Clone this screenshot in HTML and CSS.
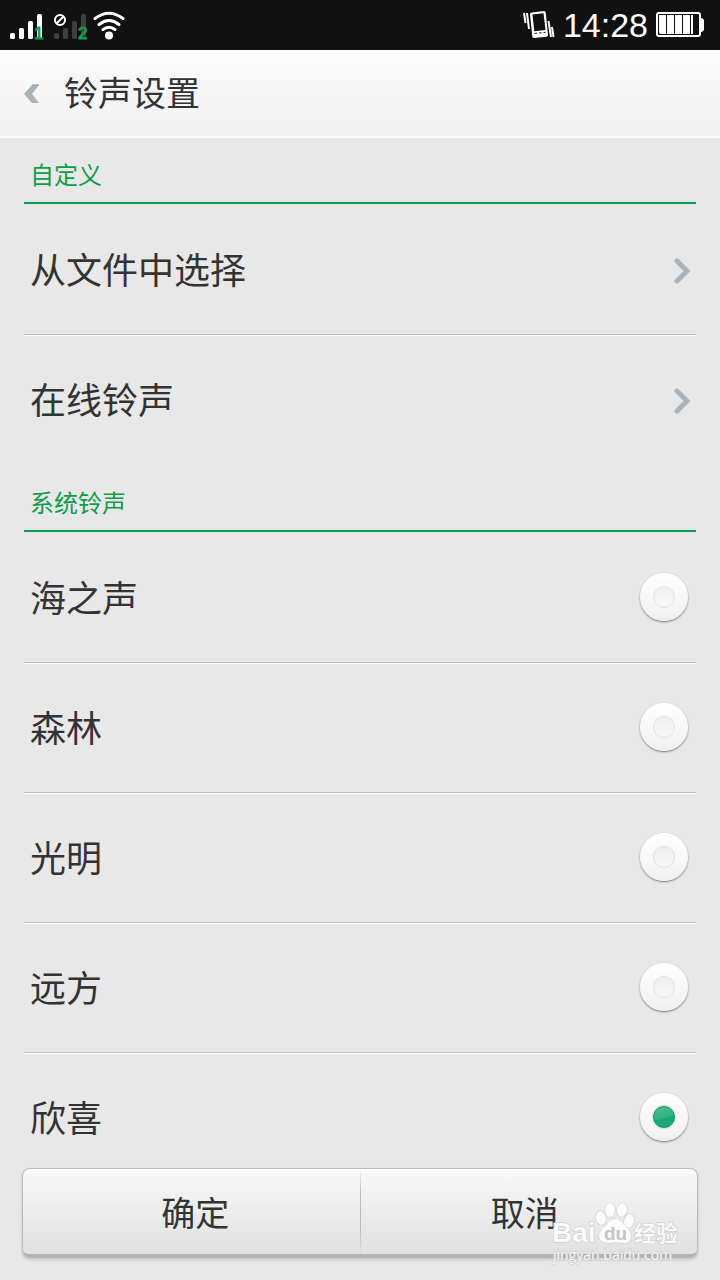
FILE: index.html
```html
<!DOCTYPE html>
<html lang="zh-CN">

<head>
    <meta charset="UTF-8">
    <meta name="viewport" content="width=device-width, initial-scale=1.0">
    <title>铃声设置</title>
    <link rel="stylesheet" href="styles.css">
</head>

<body>

    <!-- Status Bar -->
    <div class="status-bar">
        <svg class="signal-icons" width="118" height="32" viewBox="0 0 118 32" aria-hidden="true">
            <g fill="#fff">
                <rect x="0" y="24" width="5" height="6" rx="1.5" />
                <rect x="9" y="19" width="5" height="11" rx="1.5" />
                <rect x="18" y="12" width="5" height="18" rx="1.5" />
                <rect x="27" y="5" width="5" height="25" rx="1.5" />
            </g>
            <g fill="#3e3e3e">
                <rect x="44" y="24" width="5" height="6" rx="1.5" />
                <rect x="53" y="19" width="5" height="11" rx="1.5" />
                <rect x="62" y="12" width="5" height="18" rx="1.5" />
                <rect x="71" y="5" width="5" height="25" rx="1.5" />
            </g>
            <text class="sim-number" x="24" y="30">1</text>
            <text class="sim-number" x="68" y="30">2</text>
            <circle cx="50" cy="11" r="5" fill="none" stroke="#fff" stroke-width="2" />
            <path d="M46.500 14.500 53.500 7.500" stroke="#fff" stroke-width="2" />
            <g fill="none" stroke="#fff" stroke-width="3" stroke-linecap="round">
                <path d="M85 9.500Q99 -1 113 9.500" />
                <path d="M89 15.500Q99 7.500 109 15.500" />
                <path d="M93 20.500Q99 16 105 20.500" />
            </g>
            <circle cx="99" cy="26.500" r="4" fill="#fff" />
        </svg>

        <div class="status-right">
            <svg width="32" height="30" viewBox="0 0 32 30" aria-hidden="true">
                <path d="M8.500 2.500 21 1Q22.500 1 22.700 2.500L25 25Q25 26.500 23.500 26.700L11 28Q9.500 28 9.300 26.500L7 4Q7 2.700 8.500 2.500Z" fill="#fff" />
                <path d="M9.500 4.500 20.500 3.300 22.500 20 11.300 21.300Z" fill="#111" />
                <path d="M11.500 23.500 14 23.200M16 23 18.500 22.700M20.500 22.500 22.500 22.300" stroke="#111" stroke-width="1" />
                <path d="M1 3 2.500 13M4 3 6 19M25.500 11 28 27M29 17 30.500 27" stroke="#fff" stroke-width="2" />
            </svg>
            <span class="clock">14:28</span>
            <svg width="48" height="26" viewBox="0 0 48 26" aria-hidden="true">
                <rect x="1" y="1" width="43" height="23" rx="2" fill="none" stroke="#fff" stroke-width="2" />
                <path d="M45 6h1l2 2v10l-2 2h-1z" fill="#fff" />
                <path d="M3 3h7v19h-5q-2 0-2-2zM11 3h7v19h-7zM19 3h7v19h-7zM27 3h7v19h-7zM35 3h2v19h-2z" fill="#fff" />
            </svg>
        </div>
    </div>

    <!-- Title Bar -->
    <header class="title-bar">
        <a class="back" href="#" aria-label="返回">
            <svg width="16" height="20" viewBox="0 0 16 20" aria-hidden="true">
                <path d="M8 1H15L8 10 15 19H8L0 10Z" fill="#a9b3ba" />
                <path d="M8 1H15" stroke="#8b949a" stroke-width="1" />
            </svg>
        </a>
        <h1>铃声设置</h1>
    </header>

    <main class="content">
        <!-- Custom -->
        <section class="group">
            <h2>自定义</h2>
            <a class="row" href="#">
                <span>从文件中选择</span>
                <svg class="chevron" width="18" height="28" viewBox="0 0 18 28" aria-hidden="true">
                    <path d="M5 3 15 13 5 23" />
                </svg>
            </a>
            <a class="row" href="#">
                <span>在线铃声</span>
                <svg class="chevron" width="18" height="28" viewBox="0 0 18 28" aria-hidden="true">
                    <path d="M5 3 15 13 5 23" />
                </svg>
            </a>
        </section>

        <!-- System ringtones -->
        <section class="group">
            <h2>系统铃声</h2>
            <label class="row" for="tone1">海之声 <input type="radio" id="tone1" name="ringtone"></label>
            <label class="row" for="tone2">森林 <input type="radio" id="tone2" name="ringtone"></label>
            <label class="row" for="tone3">光明 <input type="radio" id="tone3" name="ringtone"></label>
            <label class="row" for="tone4">远方 <input type="radio" id="tone4" name="ringtone"></label>
            <label class="row" for="tone5">欣喜 <input type="radio" id="tone5" name="ringtone" checked></label>
        </section>
    </main>

    <!-- Bottom Buttons -->
    <footer class="bottom-bar">
        <div class="button-group">
            <button type="button">确定</button>
            <button type="button">取消</button>
        </div>
        <svg class="watermark" width="132" height="66" viewBox="0 0 132 66" aria-hidden="true">
            <g class="mark">
                <text class="mark-bold" x="2" y="40">Bai</text>
                <ellipse cx="51" cy="16" rx="5" ry="7" transform="rotate(-12 51 16)" />
                <ellipse cx="60" cy="8" rx="5" ry="7" />
                <ellipse cx="72" cy="8" rx="5" ry="7" transform="rotate(12 72 8)" />
                <ellipse cx="79" cy="19" rx="5" ry="7" transform="rotate(12 79 19)" />
                <path d="M65 17Q70 17 74 22C77 26 82 30 81 36Q80 42 73 41Q65 40 58 41Q49 41 49 34Q49 29 55 24C59 20 60 17 65 17Z" />
                <text class="mark-cn" x="84" y="39">经验</text>
                <text class="mark-url" x="3" y="58">jingyan.baidu.com</text>
            </g>
            <text class="mark-du" x="54" y="38">du</text>
        </svg>
    </footer>

</body>

</html>
```

FILE: styles.css
```css
*,
*::before {
    box-sizing: border-box;
}

body {
    font-family: "Liberation Sans", "Noto Sans CJK SC", sans-serif;
    background-color: #e8e8e8;
    color: #333;
    margin: 0;
    height: 100vh;
    display: flex;
    flex-direction: column;
}

h1,
h2 {
    margin: 0;
    font-weight: normal;
}

a {
    color: inherit;
    text-decoration: none;
}

svg {
    display: block;
}

/* Status bar */
.status-bar {
    flex: none;
    height: 50px;
    padding: 0 16px 0 10px;
    background-color: #111;
    display: flex;
    justify-content: space-between;
    align-items: center;
}

.signal-icons {
    overflow: visible;
}

.sim-number {
    font-size: 17px;
    fill: #0f9d4c;
    stroke: #0f9d4c;
    stroke-width: 1;
}

.status-right {
    display: flex;
    align-items: center;
    gap: 8px;
}

.clock {
    color: #fff;
    font-size: 34px;
    line-height: 48px;
}

/* Title bar */
.title-bar {
    flex: none;
    height: 88px;
    padding: 2px 24px 0;
    display: flex;
    align-items: center;
    gap: 24px;
    background: linear-gradient(#fbfbfb, #f1f1f1);
    border-bottom: 2px solid #fafafa;
}

.title-bar h1 {
    font-size: 34px;
    line-height: 48px;
}

/* List */
.content {
    flex: 1;
    min-height: 0;
    padding: 0 24px;
    overflow-y: auto;
    scrollbar-width: none;
}

.group h2 {
    height: 66px;
    margin-bottom: 2px;
    padding: 20px 6px 0;
    border-bottom: 2px solid #0f9d4c;
    color: #0f9d4c;
    font-size: 24px;
    line-height: 36px;
}

.row {
    height: 130px;
    padding: 2px 6px 0;
    display: flex;
    justify-content: space-between;
    align-items: center;
    font-size: 36px;
    line-height: 48px;
    border-bottom: 1px solid #fff;
    box-shadow: inset 0 -1px #bfbfbf;
    cursor: pointer;
}

.row:last-child {
    border-bottom-color: transparent;
    box-shadow: none;
}

.chevron {
    fill: none;
    stroke: #a9b3ba;
    stroke-width: 5;
    stroke-linecap: round;
}

input[type="radio"] {
    appearance: none;
    width: 48px;
    height: 48px;
    margin: 0 2px 6px 0;
    border-radius: 50%;
    background: linear-gradient(#fff, #f0f0f0);
    box-shadow: 0 1px 2px rgba(0, 0, 0, 0.5);
    display: grid;
    place-items: center;
    cursor: pointer;
}

input[type="radio"]::before {
    content: "";
    width: 22px;
    height: 22px;
    border: 1px solid #e2e2e2;
    border-radius: 50%;
    background: linear-gradient(#efefef, #f7f7f7);
}

input[type="radio"]:checked::before {
    border-color: #12905f;
    background: linear-gradient(165deg, #4bbf92 0%, #2fb383 50%, #17a673 60%, #1fb07c 100%);
    box-shadow: 0 0 2px rgba(18, 144, 95, 0.6);
}

/* Bottom buttons */
.bottom-bar {
    position: relative;
    flex: none;
    padding: 8px 22px 22px;
}

.button-group {
    height: 90px;
    display: flex;
    border: 1px solid #bcbcbc;
    border-bottom: 4px solid #b4b4b4;
    border-radius: 8px;
    background: linear-gradient(#f8f8f8, #e1e1e1);
    box-shadow: 0 2px 3px rgba(0, 0, 0, 0.15), inset 0 2px #fdfdfd;
}

button {
    flex: 1;
    padding: 4px 0 0 8px;
    border: none;
    background: none;
    color: #333;
    font-family: inherit;
    font-size: 34px;
    line-height: 48px;
    cursor: pointer;
}

button + button {
    padding: 4px 8px 0 0;
    border-left: 1px solid;
    border-image: linear-gradient(transparent, #bbb 30%, #bbb 70%, transparent) 1;
}

/* Watermark over the buttons */
.watermark {
    position: absolute;
    right: 38px;
    bottom: 12px;
    overflow: visible;
    pointer-events: none;
}

.mark {
    fill: #fff;
    fill-opacity: 0.85;
    stroke: #c8c8c8;
    stroke-width: 1;
    paint-order: stroke;
}

.mark-bold {
    font-size: 28px;
    font-weight: bold;
}

.mark-cn {
    font-size: 22px;
    font-weight: bold;
}

.mark-url {
    font-family: "Open Sans", sans-serif;
    font-size: 14px;
}

.mark-du {
    font-size: 19px;
    font-weight: bold;
    fill: #c4c4c4;
}
```
